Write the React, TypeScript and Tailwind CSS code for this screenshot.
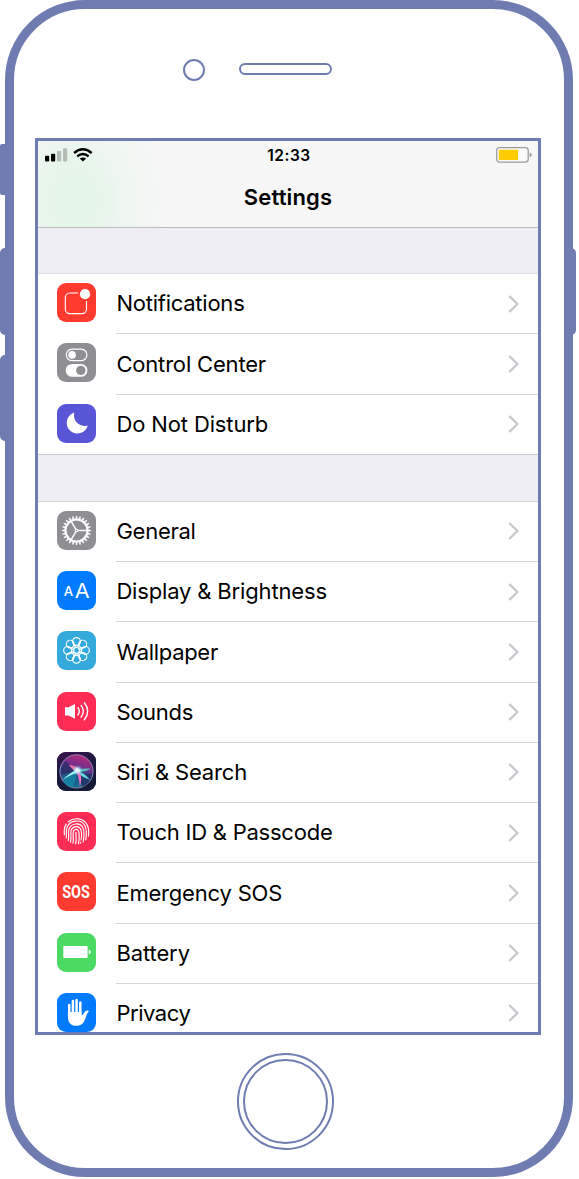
import type { ReactNode } from "react";

const circle = (n: number) => Array.from({ length: n }, (_, i) => (i * 360) / n);

type Item = { label: string; tile: string; tracking: string; icon: ReactNode };

const Notifications = (
  <>
    <rect x="8.3" y="10" width="21.2" height="20.6" rx="4.6" fill="none" stroke="#fff" strokeWidth="1.1" />
    <circle cx="28" cy="11.2" r="7" fill="#ff3b30" />
    <circle cx="28" cy="11.2" r="5.1" fill="#fff" />
  </>
);

const ControlCenter = (
  <>
    <rect x="9.3" y="6.1" width="20.6" height="11.6" rx="5.8" fill="none" stroke="#fff" strokeWidth="1.2" />
    <circle cx="15.1" cy="11.9" r="3.8" fill="#fff" />
    <rect x="8.7" y="21" width="21.7" height="12.8" rx="6.4" fill="#fff" />
    <circle cx="23.8" cy="27.4" r="4.7" fill="#8e8e93" />
  </>
);

const Moon = <path d="M17.3 8.6A10.7 10.7 0 1 0 30.8 21.4A10.6 10.6 0 0 1 17.3 8.6Z" fill="#fff" />;

const Gear = (
  <g transform="translate(19.5 19.5)" stroke="#fff" fill="none">
    <circle r="11" strokeWidth="2.1" />
    {circle(24).map((a) => (
      <path key={a} d="M11.5 -1L14.6 -.6V.6L11.5 1Z" transform={`rotate(${a})`} fill="#fff" stroke="none" />
    ))}
    {[0, 120, 240].map((a) => (
      <path key={a} d="M.5 0H10.5" transform={`rotate(${a})`} strokeWidth="1.4" />
    ))}
    <circle r="1.4" strokeWidth=".9" />
  </g>
);

const Display = (
  <g fill="#fff" fontFamily="Inter, sans-serif">
    <text x="6.8" y="25.4" fontSize="13" textLength="9.4" lengthAdjust="spacingAndGlyphs" fontWeight="500">A</text>
    <text x="17.8" y="26.6" fontSize="20.5" textLength="14.9" lengthAdjust="spacingAndGlyphs" fontWeight="400">A</text>
  </g>
);

const Wallpaper = (
  <g transform="translate(19.5 19.4)" stroke="#fff" strokeWidth="1.15" fill="none">
    {circle(8).map((a) => (
      <ellipse key={a} cx="8.9" rx="3.9" ry="3.9" transform={`rotate(${a})`} />
    ))}
    {circle(8).map((a) => (
      <path key={a} d="M3 0Q5.5 -2.6 8.2 -3.4M3 0Q5.5 2.6 8.2 3.4" transform={`rotate(${a})`} strokeWidth=".9" />
    ))}
    <circle r="2.9" />
  </g>
);

const Sounds = (
  <>
    <path d="M8 15.2H11.6L18 11.9V26.8L11.6 23.5H8Z" fill="#fff" />
    <g fill="none" stroke="#fff" strokeWidth="1.4" strokeLinecap="round">
      <path d="M21 15.7Q23.6 19.3 21 22.9" />
      <path d="M24.1 13.4Q28.6 19.3 24.1 25.2" />
      <path d="M27.4 10.8Q34 19.3 27.4 27.8" />
    </g>
  </>
);

const Siri = (
  <>
    <defs>
      <linearGradient id="siriTile" x1="0" y1="0" x2=".3" y2="1">
        <stop offset="0" stopColor="#3d124f" />
        <stop offset=".45" stopColor="#1b1941" />
        <stop offset="1" stopColor="#151b36" />
      </linearGradient>
      <linearGradient id="siriOrb" x1=".65" y1="0" x2=".35" y2="1">
        <stop offset="0" stopColor="#b8287c" />
        <stop offset=".35" stopColor="#71308c" />
        <stop offset=".55" stopColor="#2d4787" />
        <stop offset="1" stopColor="#12758f" />
      </linearGradient>
      <radialGradient id="siriGlow">
        <stop offset="0" stopColor="#fff" />
        <stop offset=".4" stopColor="#d5f8ff" stopOpacity=".8" />
        <stop offset="1" stopColor="#64bde0" stopOpacity="0" />
      </radialGradient>
    </defs>
    <rect width="39" height="39" rx="9" fill="url(#siriTile)" />
    <circle cx="19.5" cy="19.4" r="16.6" fill="url(#siriOrb)" stroke="#9a8fb5" strokeWidth=".9" />
    <path d="M20 16Q12 14 9 9Q3 15 4 23Q13 21 20 18Z" fill="#2b2a63" opacity=".75" />
    <path d="M20 18Q31 24 35 21Q34 31 26 35Q22 28 20 18Z" fill="#232c62" opacity=".75" />
    <path d="M20 18C11 23 7 27 6 29Q10 35 16 35.5Q19 28 20 18Z" fill="#1586a6" opacity=".8" />
    <path d="M22 17Q28 16 34 16.6Q30 19.4 21 20.6Z" fill="#55ddc9" opacity=".8" />
    <path d="M21 16.5Q16 12.5 12 13Q16.5 19 22 21.5Z" fill="#f0709f" />
    <path d="M22 17Q13 20 5 28.5Q14 22 22 20.3Z" fill="#9ffbf3" />
    <path d="M18 18Q27 20 33 28Q25 25 19 20Z" fill="#5fdbe0" />
    <path d="M19 19Q22.4 26 22.7 34.8Q25.8 27 22.6 19Z" fill="#ee70c0" />
    <circle cx="20.5" cy="18.3" r="5.4" fill="url(#siriGlow)" />
  </>
);

const TouchId = (
  <g fill="none" stroke="#fff" strokeWidth="1.15" strokeLinecap="round">
    <path d="M11.2 9.8C17 5 26 6 29.8 12.2C32 16 32 20 31.4 24.2" />
    <path d="M9.2 12.1C6.6 16 7.1 19 7.4 22.8" />
    <path d="M9.2 26C10 22.5 8.6 19.4 9.8 16C12.6 8.2 23.4 6.6 27.6 13C30 17 29.5 23 28.8 27.8" />
    <path d="M11.2 28.6C12.4 24 10.8 20.6 12 17.2C14.2 11.2 22.2 10 25.4 14.8C28 19 27 25.5 26.2 30" />
    <path d="M13.5 30.2C14.8 25.5 13.1 21.8 14.2 18.4C15.8 14 21.2 13.4 23.3 16.6C25.5 20.4 24.6 25 24 28" />
    <path d="M16 31.2C17.2 26.8 15.3 22.5 16.4 19.4C17.4 17 20.4 16.6 21.4 18.8C23 22.3 22.2 26.8 21.5 31.6" />
    <path d="M18.7 31.8C19.8 27.6 18.8 24.3 18.9 20.4" />
    <path d="M23.6 30.3L23.4 31.2" />
  </g>
);

const Sos = (
  <g transform="translate(5.2 26.3) scale(.79 1)">
    <text fill="#fff" fontFamily="Roboto, sans-serif" fontWeight="700" fontSize="18.2">SOS</text>
  </g>
);

const Battery = (
  <>
    <rect x="6.3" y="13" width="24.3" height="12" rx=".8" fill="#fff" />
    <path d="M31.6 16.8Q33.8 17.2 33.8 19T31.6 21.2Z" fill="#fff" />
  </>
);

const Hand = (
  <>
    <g stroke="#fff" strokeWidth="2.5" strokeLinecap="round">
      <path d="M12.2 12V23M15.9 8V22M19.6 7V22M23.3 9.5V22" />
    </g>
    <path d="M10.95 19H24.5V22.8C26.8 21.2 27.2 18.3 29.4 17.7Q31.2 17.2 32 18.1C29.8 20.4 29.3 23.7 27.5 27.4C25.8 31.2 23.2 32.8 19.2 32.8C13.8 32.8 10.95 29.5 10.95 24Z" fill="#fff" />
  </>
);

const system: Item[] = [
  { label: "Notifications", tile: "bg-[#ff3b30]", tracking: "tracking-[-0.24px]", icon: Notifications },
  { label: "Control Center", tile: "bg-[#8e8e93]", tracking: "tracking-[-0.18px]", icon: ControlCenter },
  { label: "Do Not Disturb", tile: "bg-[#5856d6]", tracking: "tracking-[-0.13px]", icon: Moon },
];

const device: Item[] = [
  { label: "General", tile: "bg-[#8e8e93]", tracking: "tracking-[-0.25px]", icon: Gear },
  { label: "Display & Brightness", tile: "bg-[#007aff]", tracking: "tracking-[-0.16px]", icon: Display },
  { label: "Wallpaper", tile: "bg-[#34aadc]", tracking: "tracking-[-0.3px]", icon: Wallpaper },
  { label: "Sounds", tile: "bg-[#ff2d55]", tracking: "tracking-[-0.3px]", icon: Sounds },
  { label: "Siri & Search", tile: "bg-[#1b1941]", tracking: "tracking-[-0.18px]", icon: Siri },
  { label: "Touch ID & Passcode", tile: "bg-[#ff2d55]", tracking: "tracking-[-0.23px]", icon: TouchId },
  { label: "Emergency SOS", tile: "bg-[#ff3b30]", tracking: "tracking-[-0.2px]", icon: Sos },
  { label: "Battery", tile: "bg-[#4cd964]", tracking: "tracking-[-0.1px]", icon: Battery },
  { label: "Privacy", tile: "bg-[#007aff]", tracking: "tracking-[-0.45px]", icon: Hand },
];

function Row({ item, last }: { item: Item; last: boolean }) {
  return (
    <li className={last ? "flex h-[60.25px] shrink-0 border-b border-[#cfced4] pl-[19px]" : "flex h-[60.25px] shrink-0 pl-[19px]"}>
      <div className="w-[59px] shrink-0 pt-[9px]">
        <div className={`size-[39px] rounded-[9px] ${item.tile}`}>
          <svg viewBox="0 0 39 39" className="block size-full overflow-visible">{item.icon}</svg>
        </div>
      </div>
      <div className={last ? "flex grow items-center justify-between pr-[19px]" : "flex grow items-center justify-between border-b border-[#d5d4d9] pr-[19px]"}>
        <span className={`pb-[0.4px] pl-[0.4px] text-[22px] leading-none whitespace-nowrap ${item.tracking}`}>{item.label}</span>
        <svg viewBox="0 0 11 18" className="h-[18px] w-[11px]" fill="none" stroke="#c7c7cc" strokeWidth="2.3">
          <path d="M1.3 1L9.4 9L1.3 17" />
        </svg>
      </div>
    </li>
  );
}

function Section({ items }: { items: Item[] }) {
  return (
    <ul className="flex shrink-0 flex-col bg-white">
      {items.map((item, i) => (
        <Row key={item.label} item={item} last={i === items.length - 1} />
      ))}
    </ul>
  );
}

function StatusBar() {
  return (
    <div className="grid h-[28px] grid-cols-3 items-center pr-[6px] pl-[7px]">
      <div className="flex items-end gap-[5px]">
        <svg viewBox="0 0 23 14" className="h-[14px] w-[23px]">
          <rect x="0" y="7.7" width="4.2" height="5.8" rx="1" />
          <rect x="6" y="5.7" width="4.2" height="7.8" rx="1" />
          <rect x="12" y="3" width="4.2" height="10.5" rx="1" fill="#b3bdb6" />
          <rect x="18" y=".3" width="4.2" height="13.2" rx="1" fill="#b3bdb6" />
        </svg>
        <svg viewBox="0 0 20 14" className="h-[14px] w-[20px]" fill="none" stroke="#000" strokeWidth="2.4">
          <path d="M1.1 5Q9.9 -2.4 18.7 5" />
          <path d="M4.2 8.4Q9.9 3.5 15.6 8.4" />
          <path d="M6.7 10.6Q9.9 8.2 13.1 10.6L9.9 13.6Z" fill="#000" stroke="none" />
        </svg>
      </div>
      <span className="pt-[1px] pl-[1px] text-center text-[15.5px] leading-none font-semibold tracking-[0.5px]">12:33</span>
      <svg viewBox="0 0 36 16" className="h-[16px] w-[36px] justify-self-end">
        <rect x=".7" y=".7" width="31.5" height="14.4" rx="2.8" fill="#fafafa" stroke="#9d9d9f" strokeWidth="1.3" />
        <rect x="2.8" y="2.8" width="19.3" height="10.2" rx=".6" fill="#ffcc00" />
        <path d="M33.7 5.5Q35.8 6 35.8 7.9T33.7 10.3Z" fill="#9d9d9f" />
      </svg>
    </div>
  );
}

export default function App() {
  return (
    <div className="relative h-[1179px] w-[579px] overflow-hidden bg-white pl-[5px] font-['Inter','Liberation_Sans',sans-serif] text-black">
      <div className="absolute top-[144px] left-0 h-[51px] w-[6px] rounded-l-[2px] bg-[#6f7cb1]" />
      <div className="absolute top-[248px] left-0 h-[87px] w-[6px] rounded-l-[5px] bg-[#6f7cb1]" />
      <div className="absolute top-[355px] left-0 h-[86px] w-[6px] rounded-l-[5px] bg-[#6f7cb1]" />
      <div className="absolute top-[248px] left-[570px] h-[87px] w-[6px] rounded-r-[5px] bg-[#6f7cb1]" />

      <div className="flex h-[1177px] w-[568px] flex-col rounded-[80px] border-9 border-[#6f7cb1] px-[21px]">
        <div className="flex h-[129px] shrink-0 items-start gap-[34px] pt-[50px] pl-[148px]">
          <div className="size-[22px] rounded-full border-2 border-[#6f7cb1]" />
          <div className="mt-[4px] h-[12px] w-[93px] rounded-full border-2 border-[#6f7cb1]" />
        </div>

        <main className="flex h-[897px] w-[506px] shrink-0 flex-col overflow-hidden border-3 border-[#6f7cb1] bg-[#efeef4]">
          <header className="h-[87px] shrink-0 border-b border-[#bcbcc0] bg-[#f7f7f7] bg-[radial-gradient(ellipse_64px_84px_at_36px_58px,#e3f7e8_0%,#e6f6ea_45%,rgba(236,246,239,0.8)_75%,rgba(244,246,245,0)_150%)]">
            <StatusBar />
            <h1 className="pt-[16px] text-center text-[22px] leading-[24px] font-semibold tracking-[0.15px]">Settings</h1>
          </header>
          <div className="h-[46px] shrink-0 border-b border-[#dddce2]" />
          <Section items={system} />
          <div className="h-[47px] shrink-0 border-b border-[#d5d4da]" />
          <Section items={device} />
        </main>

        <div className="mt-[18px] ml-[202px] size-[97px] shrink-0 rounded-full border-2 border-[#6f7cb1] p-[4px]">
          <div className="size-full rounded-full border-2 border-[#6f7cb1]" />
        </div>
      </div>
    </div>
  );
}
